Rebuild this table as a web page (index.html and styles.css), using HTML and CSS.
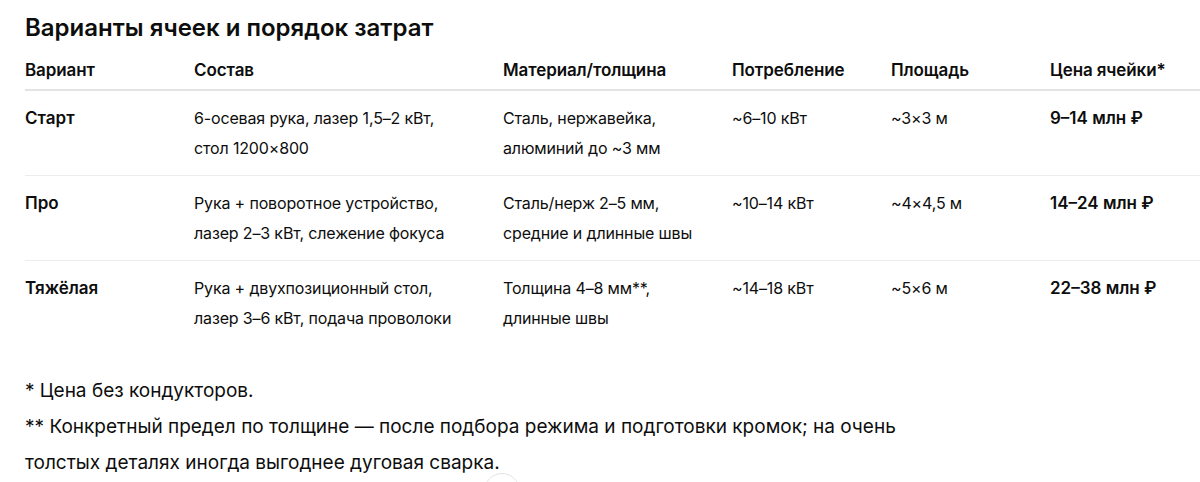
FILE: index.html
```html
<!DOCTYPE html>
<html lang="ru">
<head>
<meta charset="utf-8">
<title>Варианты ячеек</title>
<link rel="stylesheet" href="styles.css">
</head>
<body>
<main class="page">
  <h2 class="title">Варианты ячеек и порядок затрат</h2>
  <div class="table-wrap">
    <table class="cells">
      <colgroup>
        <col class="c1"><col class="c2"><col class="c3"><col class="c4"><col class="c5"><col class="c6">
      </colgroup>
      <thead>
        <tr>
          <th>Вариант</th>
          <th>Состав</th>
          <th>Материал/толщина</th>
          <th>Потребление</th>
          <th>Площадь</th>
          <th>Цена ячейки*</th>
        </tr>
      </thead>
      <tbody>
        <tr>
          <td class="name">Старт</td>
          <td>6-осевая рука, лазер 1,5–2&nbsp;кВт,<br>стол 1200×800</td>
          <td>Сталь, нержавейка,<br>алюминий до ~3&nbsp;мм</td>
          <td>~6–10&nbsp;кВт</td>
          <td>~3×3&nbsp;м</td>
          <td class="price">9–14 млн ₽</td>
        </tr>
        <tr>
          <td class="name">Про</td>
          <td>Рука + поворотное устройство,<br>лазер 2–3&nbsp;кВт, слежение фокуса</td>
          <td>Сталь/нерж 2–5&nbsp;мм,<br>средние и длинные швы</td>
          <td>~10–14&nbsp;кВт</td>
          <td>~4×4,5&nbsp;м</td>
          <td class="price">14–24 млн ₽</td>
        </tr>
        <tr>
          <td class="name">Тяжёлая</td>
          <td>Рука + двухпозиционный стол,<br>лазер 3–6&nbsp;кВт, подача проволоки</td>
          <td>Толщина 4–8&nbsp;мм**,<br>длинные швы</td>
          <td>~14–18&nbsp;кВт</td>
          <td>~5×6&nbsp;м</td>
          <td class="price">22–38 млн ₽</td>
        </tr>
      </tbody>
    </table>
  </div>
  <p class="note first">* Цена без кондукторов.</p>
  <p class="note">** Конкретный предел по толщине — после подбора режима и подготовки кромок; на очень толстых деталях иногда выгоднее дуговая сварка.</p>
  <button class="scroll-btn" aria-label="Прокрутить вниз">
    <svg width="16" height="16" viewBox="0 0 16 16" fill="none" stroke="#0d0d0d" stroke-width="1.8" stroke-linecap="round" stroke-linejoin="round"><path d="M8 3v10M3.5 8.5 8 13l4.5-4.5"/></svg>
  </button>
</main>
</body>
</html>
```

FILE: styles.css
```css
html, body {
  margin: 0;
  padding: 0;
  background: #ffffff;
}
body {
  font-family: Inter, "Noto Sans", "Liberation Sans", sans-serif;
  color: #0d0d0d;
  overflow: hidden;
}
.page {
  position: relative;
  padding: 12px 0 0 25px;
  height: 470px;
}
.title {
  margin: 0;
  font-size: 24px;
  line-height: 32px;
  font-weight: 600;
  letter-spacing: 0;
}
.table-wrap {
  margin-top: 11px;
}
.cells {
  border-collapse: collapse;
  table-layout: fixed;
  width: 1175px;
}
.c1 { width: 169px; }
.c2 { width: 309px; }
.c3 { width: 229px; }
.c4 { width: 159px; }
.c5 { width: 159px; }
.c6 { width: 150px; }
.cells th {
  text-align: left;
  font-weight: 600;
  font-size: 17px;
  line-height: 30px;
  padding: 0 0 4px 0;
  border-bottom: 2px solid #e3e3e3;
  letter-spacing: -0.1px;
  white-space: nowrap;
}
.cells td {
  vertical-align: top;
  font-size: 16px;
  line-height: 30px;
  padding: 12px 0;
  border-bottom: 1px solid #ececec;
  letter-spacing: -0.15px;
  white-space: nowrap;
}
.cells tbody tr:last-child td {
  border-bottom: none;
}
.cells td.name,
.cells td.price {
  font-weight: 600;
  font-size: 17px;
  letter-spacing: 0;
}
.note {
  margin: 0;
  font-size: 19px;
  line-height: 36px;
  max-width: 920px;
}
.note.first {
  margin-top: 28px;
}
.scroll-btn {
  position: absolute;
  left: 484px;
  top: 473px;
  width: 36px;
  height: 36px;
  border-radius: 50%;
  border: 1px solid #e3e3e3;
  background: #ffffff;
  display: flex;
  align-items: center;
  justify-content: center;
  padding: 0;
}
```
